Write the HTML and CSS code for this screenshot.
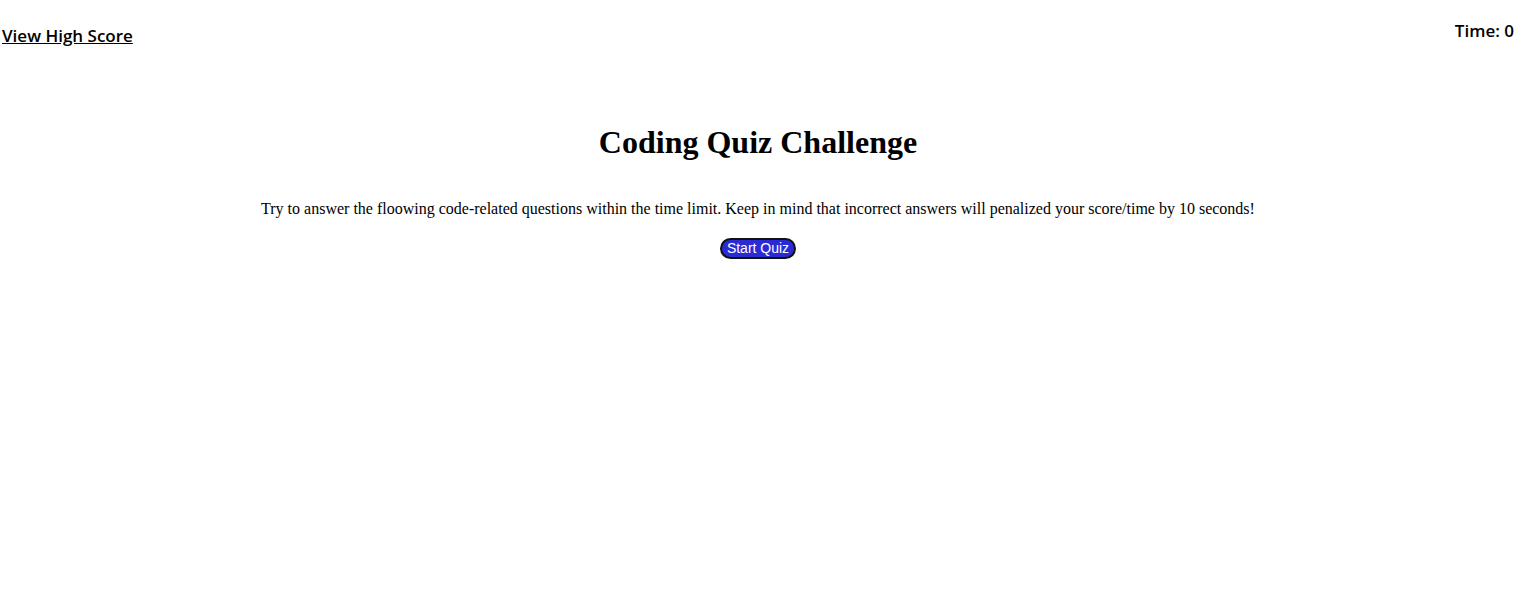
FILE: index.html
```html
<!DOCTYPE html>
<html lang="en">
<head>
<meta charset="utf-8">
<title>Coding Quiz Challenge</title>
<link rel="stylesheet" href="styles.css">
</head>
<body>
<div class="page">
  <header class="top-bar">
    <a class="high-score" href="#">View High Score</a>
    <div class="timer">Time: <span>0</span></div>
  </header>
  <main class="intro">
    <h1 class="title">Coding Quiz Challenge</h1>
    <p class="lead">Try to answer the floowing code-related questions within the time limit. Keep in mind that incorrect answers will penalized your score/time by 10 seconds!</p>
    <button class="start-btn" type="button">Start Quiz</button>
  </main>
</div>
</body>
</html>
```
FILE: styles.css
```css
html, body {
  margin: 0;
  padding: 0;
  background: #fff;
}
body {
  font-family: "Liberation Serif", "Times New Roman", serif;
  color: #000;
}
.page {
  width: 1516px;
}
.top-bar {
  display: flex;
  justify-content: space-between;
  align-items: flex-start;
  height: 38px;
  padding: 0 2px 0 2px;
  font-family: "Open Sans", "DejaVu Sans", sans-serif;
  font-size: 17px;
  font-weight: 600;
}
.high-score {
  color: #000;
  text-decoration: underline;
  margin-top: 24px;
}
.timer {
  margin-top: 19px;
}
.intro {
  text-align: center;
  padding-top: 86px;
}
.title {
  font-size: 32px;
  font-weight: bold;
  margin: 0;
  line-height: 37px;
}
.lead {
  font-size: 16px;
  margin: 39px 0 0 0;
  line-height: 18px;
}
.start-btn {
  margin-top: 20px;
  font-family: "Liberation Sans", Arial, sans-serif;
  font-size: 14px;
  color: #fff;
  background: #2b2bd6;
  border: 2px solid #111;
  border-radius: 11px;
  padding: 0 5px;
  height: 21px;
  white-space: nowrap;
  line-height: 17px;
}
```
